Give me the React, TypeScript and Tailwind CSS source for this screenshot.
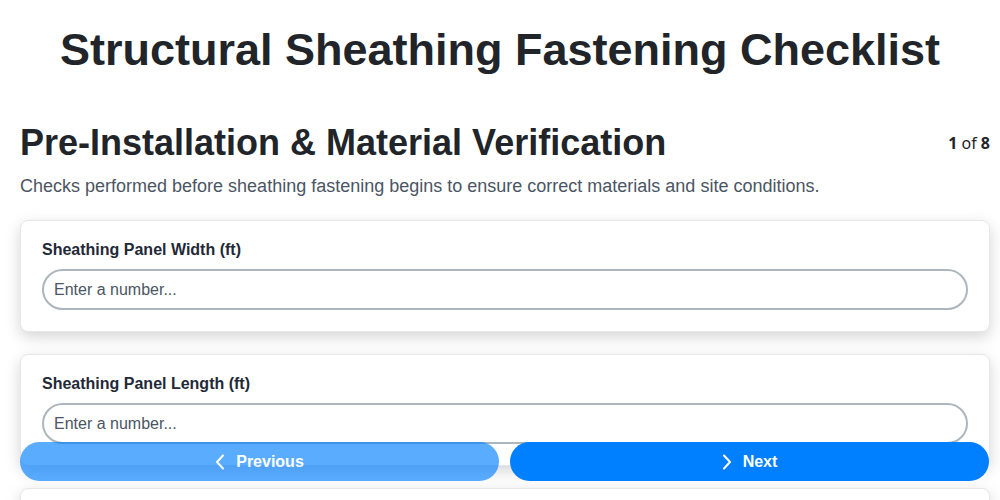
import React from "react";

function Field({ label }: { label: string }) {
  return (
    <div className="h-[112px] rounded-lg border border-[#e5e7eb] bg-white px-[21px] pt-[17px] shadow-[0_5px_15px_rgba(0,0,0,0.17)]">
      <label className="block text-[16px] leading-[24px] font-bold text-[#1f2937] mb-[7px]">{label}</label>
      <input
        type="text"
        placeholder="Enter a number..."
        className="block w-full h-[41px] rounded-full border-2 border-[#adb5bd] bg-white px-[10px] text-[16px] text-[#374151] placeholder:text-[#4b5563] outline-none"
      />
    </div>
  );
}

export default function App() {
  return (
    <div className="min-h-screen bg-white font-['Liberation_Sans',Arial,sans-serif] text-[#212529]">
      <h1 className="pt-[22px] pb-[43px] text-center text-[45px] leading-[56px] font-bold font-['Liberation_Sans_Narrow','Liberation_Sans',sans-serif] text-[#212529]">
        Structural Sheathing Fastening Checklist
      </h1>
      <div className="pl-5 pr-[10px]">
        <div className="flex items-start justify-between">
          <h2 className="text-[36px] leading-[44px] font-bold text-[#212529]">Pre-Installation &amp; Material Verification</h2>
          <div className="pt-[10px] text-[16px] font-['Noto_Sans',sans-serif] text-[#212529]">
            <span className="font-bold">1</span> of <span className="font-bold">8</span>
          </div>
        </div>
        <p className="mt-[8px] text-[18px] text-[#4b5563]">
          Checks performed before sheathing fastening begins to ensure correct materials and site conditions.
        </p>
        <div className="mt-[20px] flex flex-col gap-[22px] pb-[100px]">
          <Field label="Sheathing Panel Width (ft)" />
          <Field label="Sheathing Panel Length (ft)" />
          <Field label="Fastener Type" />
        </div>
      </div>
      <div className="fixed bottom-[19px] left-[20px] right-[11px] flex gap-[11px]">
        <button className="flex-1 h-[39px] rounded-full bg-[#0080ff] opacity-65 text-white font-bold text-[16px] flex items-center justify-center gap-[11px]">
          <svg width="10" height="16" viewBox="0 0 10 16" fill="none" stroke="currentColor" strokeWidth="2" strokeLinecap="round" strokeLinejoin="round"><path d="M8 1.5L2 8l6 6.5" /></svg>
          Previous
        </button>
        <button className="flex-1 h-[39px] rounded-full bg-[#0080ff] text-white font-bold text-[16px] flex items-center justify-center gap-[11px]">
          <svg width="10" height="16" viewBox="0 0 10 16" fill="none" stroke="currentColor" strokeWidth="2" strokeLinecap="round" strokeLinejoin="round"><path d="M2 1.5L8 8l-6 6.5" /></svg>
          Next
        </button>
      </div>
    </div>
  );
}
